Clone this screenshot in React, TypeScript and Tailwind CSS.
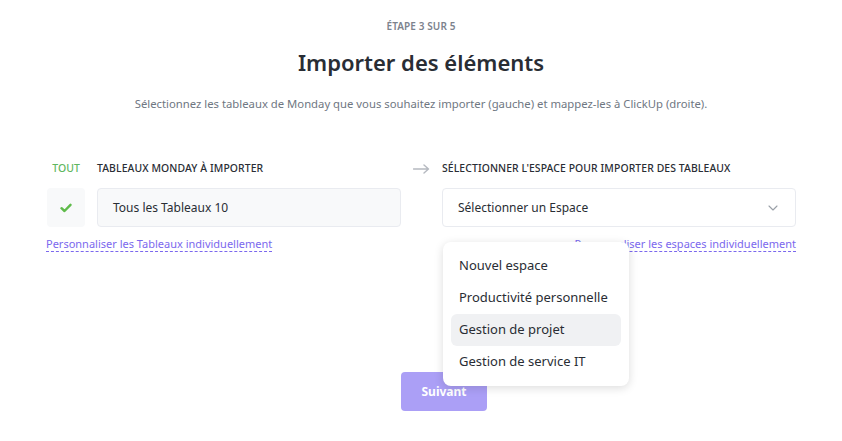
import React from "react";

export default function App() {
  const font = { fontFamily: '"Noto Sans", "Open Sans", Arial, sans-serif' };
  return (
    <div className="w-[842px] h-[441px] bg-white overflow-hidden relative text-[#292d34]" style={font}>
      <div className="flex flex-col items-center">
        <div className="mt-[19px] h-[14px] text-[10px] leading-[14px] font-semibold text-[#7c828d] tracking-[0.1px]">ÉTAPE 3 SUR 5</div>
        <h1 className="mt-[14px] h-[30px] text-[22px] leading-[30px] font-semibold text-[#292d34]">Importer des éléments</h1>
        <p className="mt-[19px] h-[16px] text-[11.3px] leading-[16px] text-[#6f7782]">
          Sélectionnez les tableaux de Monday que vous souhaitez importer (gauche) et mappez-les à ClickUp (droite).
        </p>
      </div>

      <div className="mx-auto w-[750px] mt-[49px] flex pl-[1px]">
        {/* Left column */}
        <div className="w-[354px] flex flex-col">
          <div className="flex items-center h-[16px]">
            <div className="w-[38px] text-center text-[10.5px] font-medium text-[#5fb75f]">TOUT</div>
            <div className="ml-[12px] text-[10.4px] font-medium text-[#292d34] tracking-[0.1px]">TABLEAUX MONDAY À IMPORTER</div>
          </div>
          <div className="flex mt-[11px] h-[39px]">
            <div className="w-[38px] rounded-[4px] bg-[#f8f9fa] flex items-center justify-center">
              <svg width="12" height="10" viewBox="0 0 12 10">
                <path d="M1.5 5.2 L4.5 8 L10.5 1.8" fill="none" stroke="#5fbb4a" strokeWidth="2.4" strokeLinecap="round" strokeLinejoin="round" />
              </svg>
            </div>
            <div className="ml-[12px] flex-1 rounded-[4px] border border-[#e9ebf0] bg-[#f8f9fa] flex items-center pl-[15px] text-[12px] text-[#292d34]">
              Tous les Tableaux 10
            </div>
          </div>
          <div className="mt-[9px] flex">
            <span className="-ml-[1px] text-[11px] leading-[15px] text-[#7b68ee] border-b border-dashed border-[#7b68ee]">
              Personnaliser les Tableaux individuellement
            </span>
          </div>
        </div>

        {/* Arrow */}
        <div className="w-[41px] flex justify-center">
          <div className="h-[16px] flex items-center">
            <svg width="17" height="10" viewBox="0 0 17 10">
              <path d="M0.5 5 H15.5 M11 1 L15.5 5 L11 9" fill="none" stroke="#b5b9c0" strokeWidth="1.4" strokeLinecap="round" strokeLinejoin="round" />
            </svg>
          </div>
        </div>

        {/* Right column */}
        <div className="w-[354px] flex flex-col relative">
          <div className="flex items-center h-[16px]">
            <div className="text-[10.4px] font-medium text-[#292d34] tracking-[0.1px]">SÉLECTIONNER L'ESPACE POUR IMPORTER DES TABLEAUX</div>
          </div>
          <div className="mt-[11px] h-[39px] rounded-[4px] border border-[#e9ebf0] bg-white flex items-center justify-between pl-[15px] pr-[17px] text-[12px] text-[#292d34]">
            <span>Sélectionner un Espace</span>
            <svg width="10" height="6" viewBox="0 0 10 6">
              <path d="M1 1 L5 5 L9 1" fill="none" stroke="#9aa0a8" strokeWidth="1.1" strokeLinecap="round" strokeLinejoin="round" />
            </svg>
          </div>
          <div className="mt-[9px] flex justify-end">
            <span className="text-[11px] leading-[15px] text-[#7b68ee] border-b border-dashed border-[#7b68ee]">
              Personnaliser les espaces individuellement
            </span>
          </div>

          {/* Dropdown menu */}
          <div className="absolute left-[1px] top-[81px] w-[186px] z-10 rounded-[8px] bg-white shadow-[0_2px_10px_rgba(0,0,0,0.14)] py-[8px] px-[8px]">
            {["Nouvel espace", "Productivité personnelle", "Gestion de projet", "Gestion de service IT"].map((t) => (
              <div
                key={t}
                className={
                  "h-[32px] flex items-center pl-[8px] rounded-[6px] text-[13px] text-[#292d34] " +
                  (t === "Gestion de projet" ? "bg-[#f0f1f3]" : "")
                }
              >
                {t}
              </div>
            ))}
          </div>
        </div>
      </div>

      <div className="flex justify-center mt-[120px] pl-[46px]">
        <button className="w-[86px] h-[39px] rounded-[4px] bg-[#ab9ff6] text-white text-[12px] font-bold">Suivant</button>
      </div>
    </div>
  );
}
